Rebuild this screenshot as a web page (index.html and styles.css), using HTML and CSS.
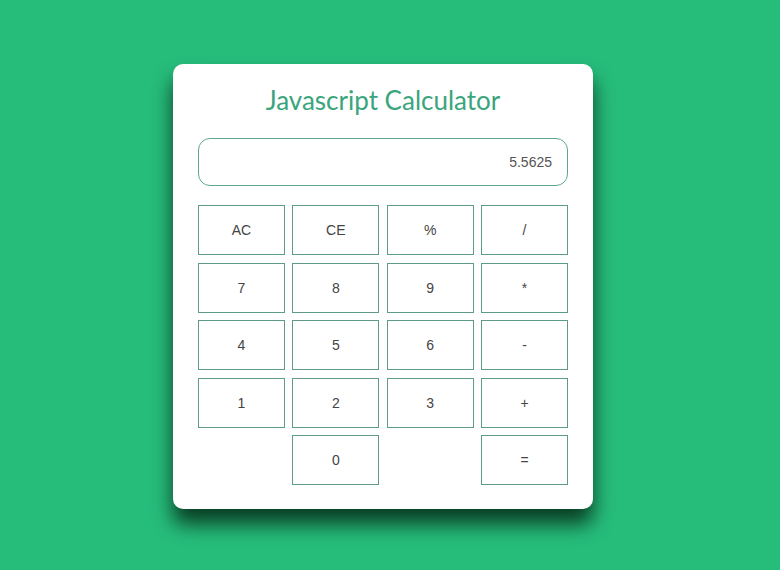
FILE: index.html
```html
<!DOCTYPE html>
<html>
<head>
<meta charset="utf-8">
<link rel="stylesheet" href="styles.css">
</head>
<body>
<div class="page">
  <div class="calc">
    <h1 class="title">Javascript Calculator</h1>
    <div class="display">5.5625</div>
    <div class="keys">
      <button class="key">AC</button>
      <button class="key">CE</button>
      <button class="key">%</button>
      <button class="key">/</button>
      <button class="key">7</button>
      <button class="key">8</button>
      <button class="key">9</button>
      <button class="key">*</button>
      <button class="key">4</button>
      <button class="key">5</button>
      <button class="key">6</button>
      <button class="key">-</button>
      <button class="key">1</button>
      <button class="key">2</button>
      <button class="key">3</button>
      <button class="key">+</button>
      <button class="key zero">0</button>
      <button class="key equals">=</button>
    </div>
  </div>
</div>
</body>
</html>
```
FILE: styles.css
```css
html, body {
  margin: 0;
  padding: 0;
  background: #26bd7b;
  height: 100%;
}
.page {
  display: flex;
  justify-content: center;
  padding-top: 64px;
  padding-right: 14px;
}
.calc {
  width: 370px;
  background: #ffffff;
  border-radius: 10px;
  padding: 19px 25px 24px 25px;
  box-shadow: 0 15px 20px rgba(0, 25, 12, 0.78);
}
.title {
  margin: 0 0 21px 0;
  text-align: center;
  font-family: "Lato", "Open Sans", sans-serif;
  font-weight: 400;
  font-size: 26px;
  line-height: 34px;
  color: #3aa57d;
}
.display {
  height: 46px;
  border: 1px solid #5ea88c;
  border-radius: 12px;
  font-family: "Liberation Sans", Arial, sans-serif;
  font-size: 14px;
  color: #555;
  display: flex;
  align-items: center;
  justify-content: flex-end;
  padding-right: 15px;
  margin-bottom: 19px;
}
.keys {
  display: grid;
  grid-template-columns: repeat(4, 1fr);
  grid-auto-rows: 50px;
  column-gap: 7.5px;
  row-gap: 7.5px;
}
.key {
  background: #ffffff;
  border: 1px solid #5e9c87;
  font-family: "Liberation Sans", Arial, sans-serif;
  font-size: 14px;
  color: #444;
  padding: 0;
  margin: 0;
}
.zero {
  grid-column: 2;
}
.equals {
  grid-column: 4;
}
```
